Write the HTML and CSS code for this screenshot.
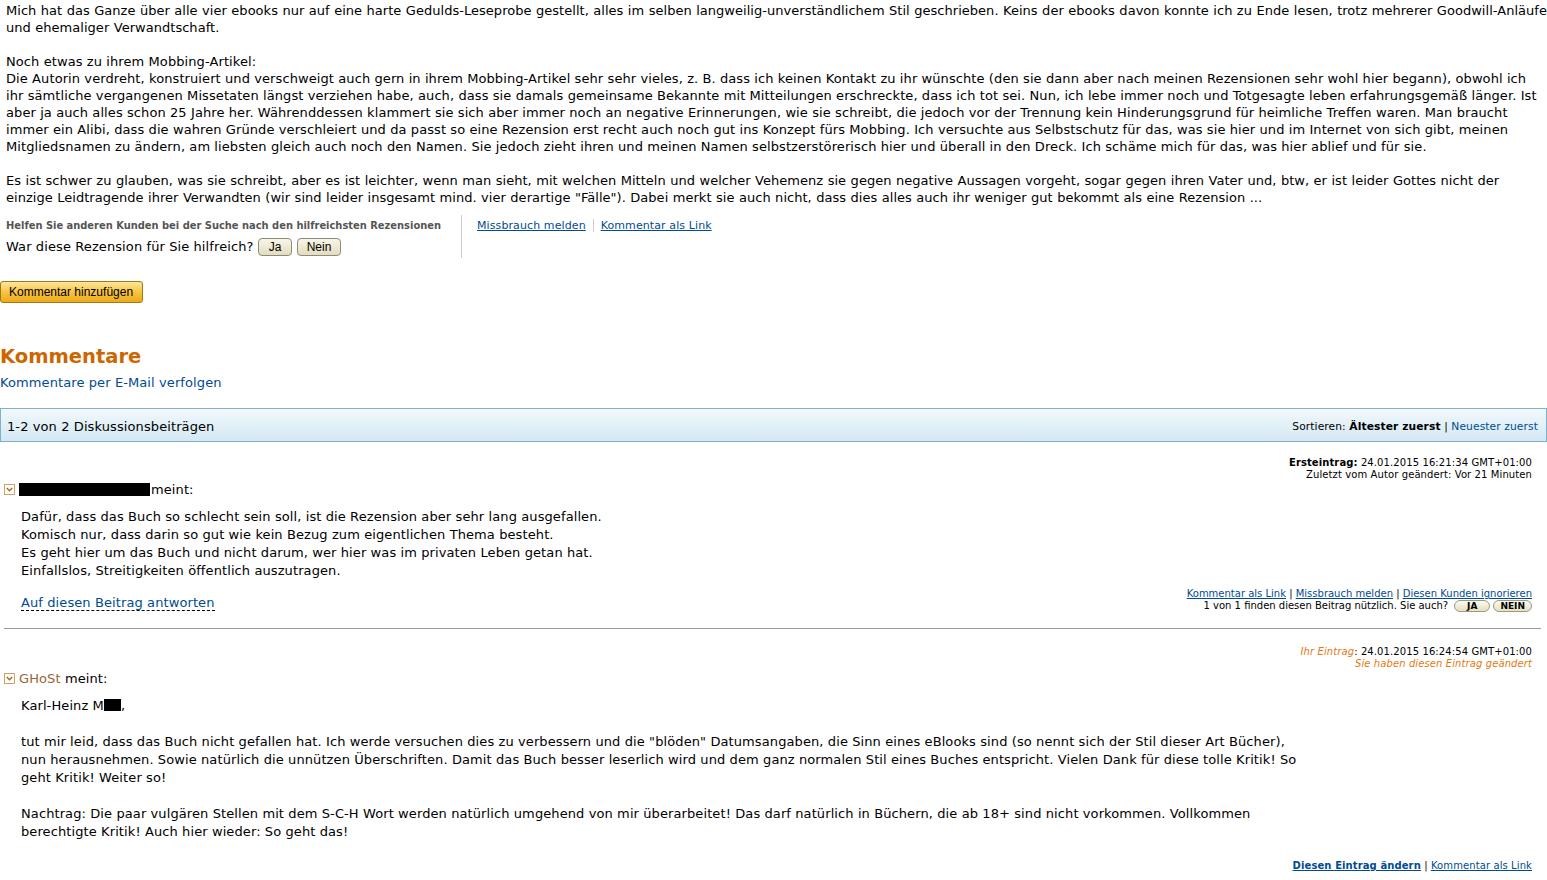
FILE: index.html
```html
<!DOCTYPE html>
<html lang="de">
<head>
<meta charset="utf-8">
<title>Rezension</title>
<link rel="stylesheet" href="styles.css">
</head>
<body>
<div class="review">
  <div class="review-text">
    <p class="para">Mich hat das Ganze über alle vier ebooks nur auf eine harte Gedulds-Leseprobe gestellt, alles im selben langweilig-unverständlichem Stil geschrieben. Keins der ebooks davon konnte ich zu Ende lesen, trotz mehrerer Goodwill-Anläufe und ehemaliger Verwandtschaft.</p>
    <p class="para para-dense">Noch etwas zu ihrem Mobbing-Artikel:<br>
    Die Autorin verdreht, konstruiert und verschweigt auch gern in ihrem Mobbing-Artikel sehr sehr vieles, z. B. dass ich keinen Kontakt zu ihr wünschte (den sie dann aber nach meinen Rezensionen sehr wohl hier begann), obwohl ich ihr sämtliche vergangenen Missetaten längst verziehen habe, auch, dass sie damals gemeinsame Bekannte mit Mitteilungen erschreckte, dass ich tot sei. Nun, ich lebe immer noch und Totgesagte leben erfahrungsgemäß länger. Ist aber ja auch alles schon 25 Jahre her. Währenddessen klammert sie sich aber immer noch an negative Erinnerungen, wie sie schreibt, die jedoch vor der Trennung kein Hinderungsgrund für heimliche Treffen waren. Man braucht immer ein Alibi, dass die wahren Gründe verschleiert und da passt so eine Rezension erst recht auch noch gut ins Konzept fürs Mobbing. Ich versuchte aus Selbstschutz für das, was sie hier und im Internet von sich gibt, meinen Mitgliedsnamen zu ändern, am liebsten gleich auch noch den Namen. Sie jedoch zieht ihren und meinen Namen selbstzerstörerisch hier und überall in den Dreck. Ich schäme mich für das, was hier ablief und für sie.</p>
    <p class="para">Es ist schwer zu glauben, was sie schreibt, aber es ist leichter, wenn man sieht, mit welchen Mitteln und welcher Vehemenz sie gegen negative Aussagen vorgeht, sogar gegen ihren Vater und, btw, er ist leider Gottes nicht der einzige Leidtragende ihrer Verwandten (wir sind leider insgesamt mind. vier derartige "Fälle"). Dabei merkt sie auch nicht, dass dies alles auch ihr weniger gut bekommt als eine Rezension ...</p>
  </div>
  <div class="helpful">
    <div class="helpful-left">
      <div class="helpful-hint">Helfen Sie anderen Kunden bei der Suche nach den hilfreichsten Rezensionen</div>
      <div class="helpful-question">War diese Rezension für Sie hilfreich? <span class="vote-btn">Ja</span> <span class="vote-btn">Nein</span></div>
    </div>
    <div class="helpful-right">
      <a href="#" class="small-link">Missbrauch melden</a><span class="vsep"></span><a href="#" class="small-link">Kommentar als Link</a>
    </div>
  </div>
</div>

<div class="add-comment"><span class="yellow-btn">Kommentar hinzufügen</span></div>

<h2 class="comments-title">Kommentare</h2>
<a href="#" class="follow-link">Kommentare per E-Mail verfolgen</a>

<div class="disc-bar">
  <span class="disc-count">1-2 von 2 Diskussionsbeiträgen</span>
  <span class="disc-sort">Sortieren: <b>Ältester zuerst</b> | <a href="#">Neuester zuerst</a></span>
</div>

<div class="post">
  <div class="post-meta">
    <div><b>Ersteintrag:</b> 24.01.2015 16:21:34 GMT+01:00</div>
    <div>Zuletzt vom Autor geändert: Vor 21 Minuten</div>
  </div>
  <div class="post-head">
    <span class="toggle"><svg width="11" height="11" viewBox="0 0 11 11"><rect x="0.5" y="0.5" width="10" height="10" fill="#fff" stroke="#c8a470"/><path d="M2.8 4 L5.5 6.8 L8.2 4" fill="none" stroke="#b06a10" stroke-width="1.4"/></svg></span><span class="redacted name-redacted"></span>meint:
  </div>
  <div class="post-body">
    Dafür, dass das Buch so schlecht sein soll, ist die Rezension aber sehr lang ausgefallen.<br>
    Komisch nur, dass darin so gut wie kein Bezug zum eigentlichen Thema besteht.<br>
    Es geht hier um das Buch und nicht darum, wer hier was im privaten Leben getan hat.<br>
    Einfallslos, Streitigkeiten öffentlich auszutragen.
  </div>
  <div class="post-foot">
    <a href="#" class="reply-link">Auf diesen Beitrag antworten</a>
    <div class="post-actions">
      <div><a href="#">Kommentar als Link</a> | <a href="#">Missbrauch melden</a> | <a href="#">Diesen Kunden ignorieren</a></div>
      <div class="useful">1 von 1 finden diesen Beitrag nützlich. Sie auch? <span class="pill pill-yes">JA</span><span class="pill pill-no">NEIN</span></div>
    </div>
  </div>
</div>

<hr class="post-sep">

<div class="post">
  <div class="post-meta">
    <div><i class="own">Ihr Eintrag</i>: 24.01.2015 16:24:54 GMT+01:00</div>
    <div><i class="own">Sie haben diesen Eintrag geändert</i></div>
  </div>
  <div class="post-head">
    <span class="toggle"><svg width="11" height="11" viewBox="0 0 11 11"><rect x="0.5" y="0.5" width="10" height="10" fill="#fff" stroke="#c8a470"/><path d="M2.8 4 L5.5 6.8 L8.2 4" fill="none" stroke="#b06a10" stroke-width="1.4"/></svg></span><span class="author">GHoSt</span> meint:
  </div>
  <div class="post-body wide">
    Karl-Heinz M<span class="redacted short-redacted"></span>,<br><br>
    tut mir leid, dass das Buch nicht gefallen hat. Ich werde versuchen dies zu verbessern und die "blöden" Datumsangaben, die Sinn eines eBlooks sind (so nennt sich der Stil dieser Art Bücher), nun herausnehmen. Sowie natürlich die unnützen Überschriften. Damit das Buch besser leserlich wird und dem ganz normalen Stil eines Buches entspricht. Vielen Dank für diese tolle Kritik! So geht Kritik! Weiter so!<br><br>
    Nachtrag: Die paar vulgären Stellen mit dem S-C-H Wort werden natürlich umgehend von mir überarbeitet! Das darf natürlich in Büchern, die ab 18+ sind nicht vorkommen. Vollkommen berechtigte Kritik! Auch hier wieder: So geht das!
  </div>
  <div class="post-edit">
    <a href="#" class="strong-link">Diesen Eintrag ändern</a> | <a href="#">Kommentar als Link</a>
  </div>
</div>
</body>
</html>
```

FILE: styles.css
```css
html, body {
  margin: 0;
  padding: 0;
  background: #fff;
}
body {
  font-family: "DejaVu Sans", Verdana, sans-serif;
  font-size: 13px;
  line-height: 17px;
  letter-spacing: 0.1px;
  color: #000;
}
a {
  color: #004b91;
}

.review {
  padding: 2px 0 0 6px;
}
.para {
  margin: 0 0 17px;
  letter-spacing: 0.03px;
  word-spacing: 0.3px;
}
.para:last-child {
  margin-bottom: 0;
}
.para-dense {
  letter-spacing: 0.092px;
  word-spacing: 0;
}

.helpful {
  display: flex;
  margin-top: 9px;
}
.helpful-left {
  width: 455px;
  border-right: 1px solid #ccc;
  padding: 4px 0 1px;
}
.helpful-hint {
  font-family: "DejaVu Sans Condensed", "DejaVu Sans", sans-serif;
  font-weight: bold;
  font-size: 11px;
  letter-spacing: 0;
  color: #555;
  line-height: 14px;
}
.helpful-question {
  margin-top: 4px;
  line-height: 20px;
}
.vote-btn {
  display: inline-block;
  font-family: "Liberation Sans", Arial, sans-serif;
  font-size: 12px;
  letter-spacing: 0;
  line-height: 16px;
  padding: 0 10px;
  border: 1px solid #8c8c78;
  border-radius: 4px;
  background: linear-gradient(#f7f5e8, #e3ddbd);
  color: #000;
}
.vote-btn + .vote-btn {
  padding: 0 9px;
}
.helpful-right {
  padding: 4px 0 0 15px;
  font-size: 11px;
  line-height: 14px;
  display: flex;
  align-items: flex-start;
}
.small-link {
  color: #004b91;
}
.vsep {
  display: inline-block;
  width: 1px;
  height: 13px;
  background: #ccc;
  margin: 0 7px;
}

.add-comment {
  margin-top: 23px;
}
.yellow-btn {
  display: inline-block;
  font-family: "Liberation Sans", Arial, sans-serif;
  font-size: 12px;
  letter-spacing: 0;
  line-height: 20px;
  padding: 0 9px 0 8px;
  border: 1px solid #9c7a1a;
  border-radius: 3px;
  background: linear-gradient(#fde79a, #f6c443 50%, #eeaa18);
  color: #000;
}

.comments-title {
  font-size: 19.5px;
  line-height: 24px;
  letter-spacing: 0;
  color: #cc6600;
  font-weight: bold;
  margin: 42px 0 0;
}
.follow-link {
  display: block;
  text-decoration: none;
  margin-top: 5px;
  line-height: 17px;
}

.disc-bar {
  margin-top: 17px;
  height: 32px;
  border: 1px solid #7fb0cc;
  background: linear-gradient(#f1f9fd, #d4e8f2);
  display: flex;
  align-items: center;
  justify-content: space-between;
  padding: 0 8px 0 6px;
}
.disc-count {
  padding-top: 2px;
}
.disc-sort {
  font-size: 10.7px;
  padding-top: 2px;
}
.disc-sort a {
  text-decoration: none;
}

.post {
  padding: 0 15px 0 4px;
}
.post-meta {
  text-align: right;
  font-size: 10px;
  line-height: 12px;
  padding-top: 15px;
}
.own {
  color: #e47911;
}
.post-head {
  line-height: 17px;
}
.toggle {
  display: inline-block;
  width: 15px;
  height: 11px;
  vertical-align: -1px;
}
.toggle svg {
  display: block;
}
.redacted {
  display: inline-block;
  background: #000;
}
.name-redacted {
  width: 131px;
  height: 13px;
  margin-right: 1px;
  vertical-align: -2px;
}
.short-redacted {
  width: 17px;
  height: 12px;
  vertical-align: -1px;
}
.author {
  color: #996633;
}
.post-body {
  padding: 10px 0 0 17px;
  line-height: 18px;
}
.post-body.wide {
  max-width: 1280px;
}
.post-foot {
  display: flex;
  justify-content: space-between;
  align-items: flex-end;
  padding-left: 17px;
  margin-top: 8px;
}
.reply-link {
  text-decoration: none;
  border-bottom: 1px dashed #000;
  line-height: 15px;
  margin-bottom: 3px;
}
.post-actions {
  text-align: right;
  font-size: 10px;
  line-height: 12px;
  letter-spacing: 0;
  margin-bottom: 2px;
}
.useful {
  display: flex;
  justify-content: flex-end;
  align-items: center;
  height: 12px;
}
.pill {
  display: inline-block;
  font-weight: bold;
  font-size: 9px;
  line-height: 10px;
  border: 1px solid #9a9a80;
  border-radius: 7px;
  background: linear-gradient(#fbfaef, #e6e1c0);
}
.pill-yes {
  margin-left: 6px;
  padding: 0 12px;
}
.pill-no {
  margin-left: 3px;
  padding: 0 6px;
}
.post-sep {
  border: 0;
  border-top: 1px solid #999;
  margin: 14px 6px 2px 4px;
}
.post-edit {
  text-align: right;
  font-size: 10px;
  margin-top: 16px;
}
.strong-link {
  font-weight: bold;
}
```
